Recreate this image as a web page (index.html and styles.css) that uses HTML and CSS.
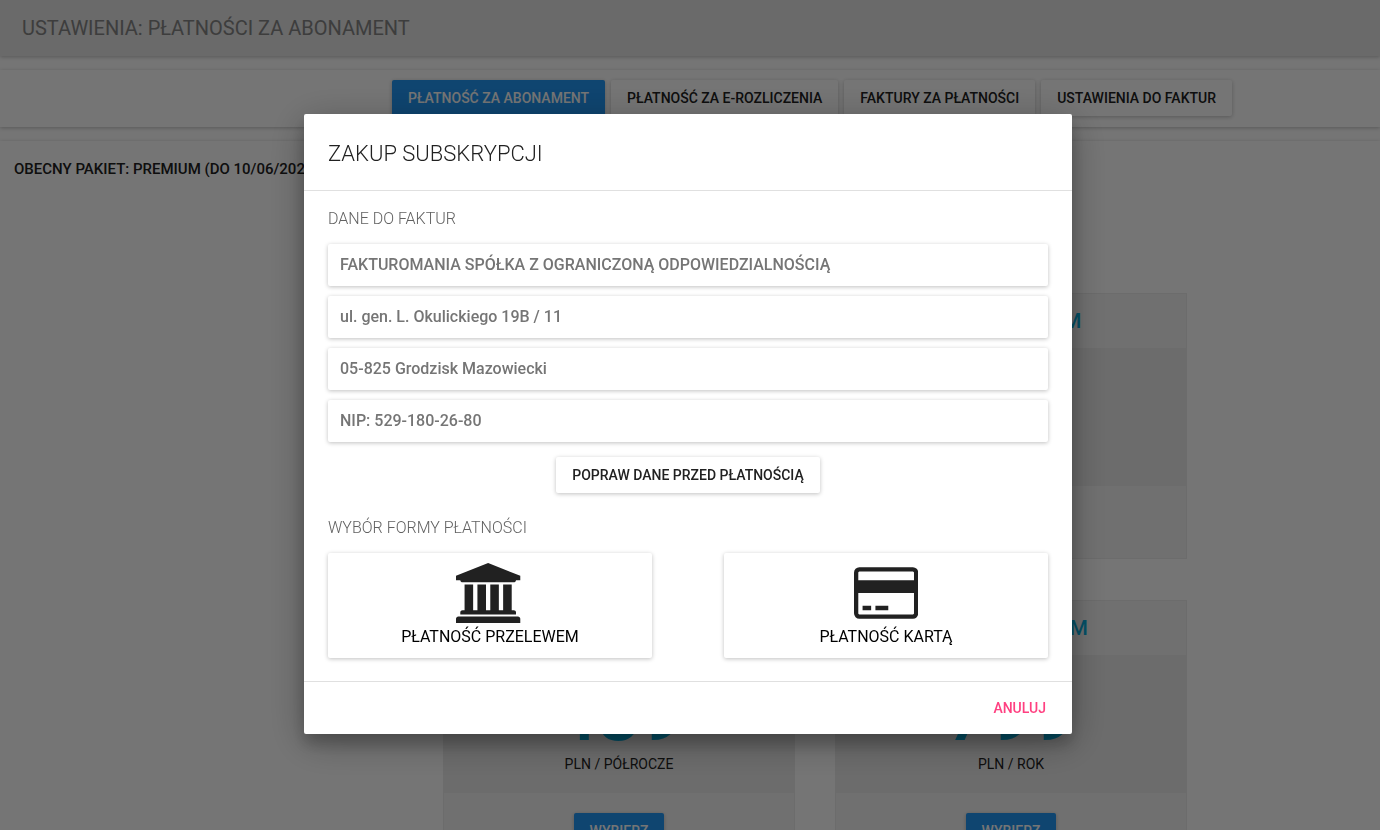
FILE: index.html
```html
<!DOCTYPE html>
<html lang="pl">
<head>
  <meta charset="UTF-8">
  <meta name="viewport" content="width=device-width, initial-scale=1.0">
  <title>Ustawienia: płatności za abonament</title>
  <link rel="stylesheet" href="styles.css">
</head>
<body>

  <div class="page">
    <header class="topbar">
      <h1>USTAWIENIA: PŁATNOŚCI ZA ABONAMENT</h1>
    </header>

    <nav class="panel tabs">
      <button type="button" class="btn btn-primary">PŁATNOŚĆ ZA ABONAMENT</button>
      <button type="button" class="btn">PŁATNOŚĆ ZA E-ROZLICZENIA</button>
      <button type="button" class="btn">FAKTURY ZA PŁATNOŚCI</button>
      <button type="button" class="btn">USTAWIENIA DO FAKTUR</button>
    </nav>

    <main class="panel content">
      <p class="current">OBECNY PAKIET: PREMIUM (DO 10/06/2021)</p>

      <div class="plans">
        <section class="plan">
          <h2>PLAN MEDIUM</h2>
          <div class="price">
            <strong>239</strong>
            <span>PLN / PÓŁROCZE</span>
          </div>
          <div class="plan-footer">
            <button type="button" class="btn btn-primary">WYBIERZ</button>
          </div>
        </section>
        <section class="plan">
          <h2>PLAN MEDIUM</h2>
          <div class="price">
            <strong>399</strong>
            <span>PLN / ROK</span>
          </div>
          <div class="plan-footer">
            <button type="button" class="btn btn-primary">WYBIERZ</button>
          </div>
        </section>
        <section class="plan">
          <h2>PLAN PREMIUM</h2>
          <div class="price">
            <strong>439</strong>
            <span>PLN / PÓŁROCZE</span>
          </div>
          <div class="plan-footer">
            <button type="button" class="btn btn-primary">WYBIERZ</button>
          </div>
        </section>
        <section class="plan">
          <h2>PLAN PREMIUM</h2>
          <div class="price">
            <strong>799</strong>
            <span>PLN / ROK</span>
          </div>
          <div class="plan-footer">
            <button type="button" class="btn btn-primary">WYBIERZ</button>
          </div>
        </section>
      </div>
    </main>
  </div>

  <div class="backdrop">
    <div class="dialog" role="dialog" aria-modal="true" aria-labelledby="dialogTitle">
      <h2 class="dialog-title" id="dialogTitle">ZAKUP SUBSKRYPCJI</h2>

      <div class="dialog-body">
        <h3>DANE DO FAKTUR</h3>
        <div class="invoice">
          <div class="invoice-row">FAKTUROMANIA SPÓŁKA Z OGRANICZONĄ ODPOWIEDZIALNOŚCIĄ</div>
          <div class="invoice-row">ul. gen. L. Okulickiego 19B / 11</div>
          <div class="invoice-row">05-825 Grodzisk Mazowiecki</div>
          <div class="invoice-row">NIP: 529-180-26-80</div>
        </div>
        <button type="button" class="btn btn-edit">POPRAW DANE PRZED PŁATNOŚCIĄ</button>

        <h3>WYBÓR FORMY PŁATNOŚCI</h3>
        <div class="methods">
          <button type="button" class="method">
            <svg viewBox="0 0 2048 1792" aria-hidden="true"><path d="M960 0l960 384v128h-128q0 26-20.500 45t-48.500 19h-1526q-28 0-48.500-19t-20.500-45h-128v-128zm-704 640h256v768h128v-768h256v768h128v-768h256v768h128v-768h256v768h59q28 0 48.500 19t20.500 45v64h-1664v-64q0-26 20.500-45t48.500-19h59v-768zm1595 960q28 0 48.500 19t20.500 45v128h-1920v-128q0-26 20.500-45t48.500-19h1782z"/></svg>
            <span>PŁATNOŚĆ PRZELEWEM</span>
          </button>
          <button type="button" class="method">
            <svg viewBox="0 0 1920 1792" aria-hidden="true"><path d="M1760 128q66 0 113 47t47 113v1216q0 66-47 113t-113 47h-1600q-66 0-113-47t-47-113v-1216q0-66 47-113t113-47h1600zm-1600 128q-13 0-22.500 9.500t-9.500 22.500v224h1664v-224q0-13-9.500-22.500t-22.500-9.500h-1600zm1600 1280q13 0 22.500-9.500t9.500-22.500v-608h-1664v608q0 13 9.500 22.500t22.500 9.500h1600zm-1504-128v-128h256v128h-256zm384 0v-128h384v128h-384z"/></svg>
            <span>PŁATNOŚĆ KARTĄ</span>
          </button>
        </div>
      </div>

      <div class="dialog-footer">
        <button type="button" class="btn-flat">ANULUJ</button>
      </div>
    </div>
  </div>

</body>
</html>
```
FILE: styles.css
```css
* {
  box-sizing: border-box;
}

body {
  margin: 0;
  font-family: Roboto, "Noto Sans", sans-serif;
  background: #fff;
  color: #212121;
}

h1, h2, h3, p {
  margin: 0;
}

button {
  font-family: inherit;
  cursor: pointer;
}

.page {
  height: 100vh;
  overflow: hidden;
}

.topbar {
  padding: 16px 22px;
  background: #e6e6e6;
  box-shadow: 0 1px 4px rgba(0, 0, 0, 0.25);
}

.topbar h1 {
  font-size: 20px;
  font-weight: 400;
  line-height: 24px;
  color: #858585;
}

.panel {
  margin-top: 14px;
  box-shadow: 0 1px 4px rgba(0, 0, 0, 0.25);
}

.tabs {
  display: flex;
  justify-content: center;
  gap: 6px;
  padding: 10px 0 11px 244px;
}

.btn {
  height: 36px;
  padding: 0 16px;
  border: none;
  border-radius: 2px;
  background: #fff;
  color: #212121;
  font-size: 14px;
  font-weight: 500;
  box-shadow: 0 1px 4px rgba(0, 0, 0, 0.25);
}

.btn.btn-primary {
  background: #2196f3;
  color: #fff;
}

.current {
  padding: 18px 14px;
  font-size: 15px;
  font-weight: 500;
  line-height: 20px;
  color: #212121;
}

.plans {
  display: grid;
  grid-template-columns: 352px 352px;
  justify-content: center;
  gap: 41px 40px;
  margin-top: 96px;
  padding-left: 250px;
}

.plan {
  border: 1px solid #ebebeb;
  background: #f5f5f5;
  text-align: center;
}

.plan h2 {
  font-size: 21px;
  font-weight: 500;
  line-height: 54px;
  color: #08b0e0;
}

.price {
  display: flex;
  flex-direction: column;
  padding: 21px 0 16px;
  background: #ebebeb;
}

.price strong {
  font-size: 76px;
  font-weight: 500;
  line-height: 76px;
  color: #08b0e0;
}

.price span {
  font-size: 14px;
  font-weight: 400;
  line-height: 25px;
  color: #212121;
}

.plan-footer {
  padding: 20px 0 16px;
}

.backdrop {
  position: fixed;
  inset: 0;
  display: flex;
  align-items: center;
  justify-content: center;
  padding: 18px 4px 0 0;
  background: rgba(0, 0, 0, 0.54);
}

.dialog {
  width: 768px;
  max-width: 90%;
  border-radius: 2px;
  background: #fff;
  box-shadow: 0 8px 38px rgba(0, 0, 0, 0.3), 0 10px 15px rgba(0, 0, 0, 0.2);
}

.dialog-title {
  padding: 26px 24px 22px;
  border-bottom: 1px solid #e0e0e0;
  font-size: 22px;
  font-weight: 300;
  line-height: 28px;
}

.dialog-body {
  padding: 18px 24px 23px;
}

.dialog-body h3 {
  margin-bottom: 15px;
  font-size: 16px;
  font-weight: 300;
  line-height: 20px;
  color: #616161;
}

.invoice {
  display: grid;
  gap: 10px;
}

.invoice-row {
  padding: 11px 12px;
  border-radius: 2px;
  font-size: 16px;
  font-weight: 500;
  line-height: 20px;
  color: #757575;
  box-shadow: 0 1px 4px rgba(0, 0, 0, 0.25);
}

.btn-edit {
  display: block;
  margin: 15px auto 25px;
}

.methods {
  display: flex;
  justify-content: space-between;
}

.method {
  display: flex;
  flex-direction: column;
  align-items: center;
  gap: 2px;
  width: 45%;
  padding: 10px 0;
  border: none;
  border-radius: 2px;
  background: #fff;
  color: #000;
  font-size: 16px;
  font-weight: 400;
  line-height: 23px;
  box-shadow: 0 1px 4px rgba(0, 0, 0, 0.25);
}

.method svg {
  height: 60px;
  fill: #212121;
}

.dialog-footer {
  display: flex;
  justify-content: flex-end;
  padding: 8px 18px;
  border-top: 1px solid #e0e0e0;
}

.btn-flat {
  height: 36px;
  padding: 0 8px;
  border: none;
  background: none;
  color: #ff4081;
  font-size: 14px;
  font-weight: 500;
}
```
